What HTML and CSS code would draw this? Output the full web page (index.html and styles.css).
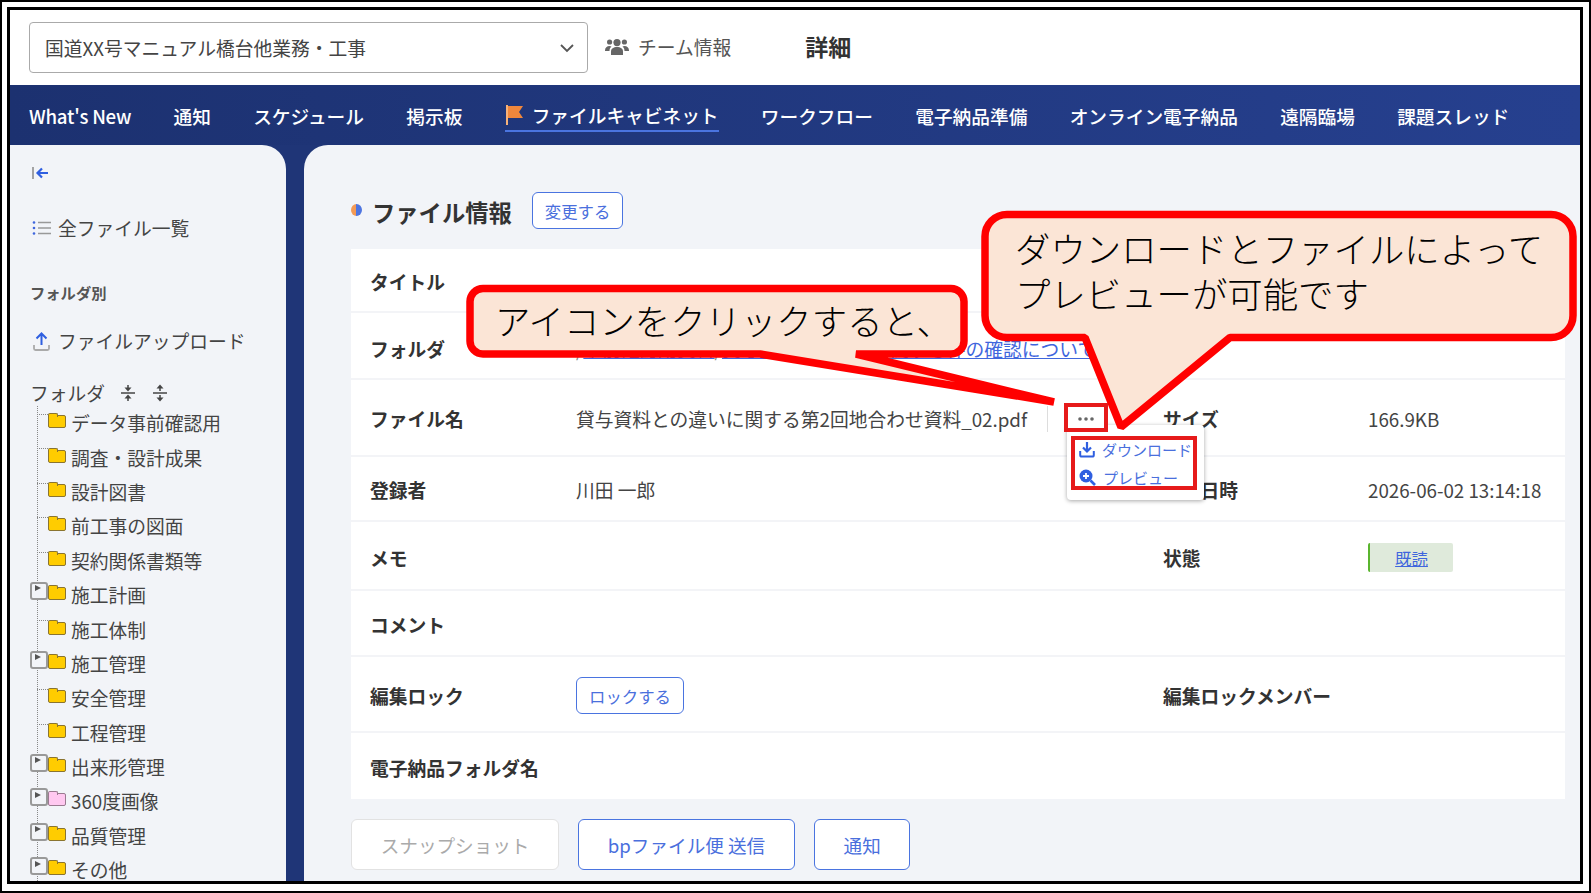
FILE: index.html
```html
<!DOCTYPE html>
<html lang="ja">
<head>
  <meta charset="UTF-8" />
  <title>ファイル情報</title>
  <link rel="stylesheet" href="styles.css">
</head>
<body>
<div class="page">
  <div class="screen">

    <header class="topbar">
      <div class="project-select">
        <span>国道XX号マニュアル橋台他業務・工事</span>
        <svg class="chevron" width="16" height="10" viewBox="0 0 16 10"><path d="M2 2l6 6 6-6" fill="none" stroke="#555" stroke-width="1.8"/></svg>
      </div>
      <div class="team">
        <svg width="24" height="18" viewBox="0 0 24 18" fill="#666"><circle cx="12" cy="4.6" r="3.6"/><circle cx="4.6" cy="4" r="2.6"/><circle cx="19.4" cy="4" r="2.6"/><path d="M6 17v-3.5C6 10.500 8.500 9 12 9s6 1.500 6 4.500V17z"/><path d="M0 12.500C0 9.500 2 8 4.500 8c.9 0 1.500.2 2 .5C5 9.700 4.500 11.200 4.500 13H0zM24 12.500C24 9.500 22 8 19.500 8c-.9 0-1.500.2-2 .5 1.500 1.200 2 2.700 2 4.500H24z"/></svg>
        <span>チーム情報</span>
      </div>
      <div class="page-name">詳細</div>
    </header>

    <nav class="mainnav">
      <a>What's New</a>
      <a>通知</a>
      <a>スケジュール</a>
      <a>掲示板</a>
      <a class="active">
        <svg width="19" height="20" viewBox="0 0 19 20"><path d="M1 0h2v20H1z" fill="#f6b27a"/><path d="M3 1h15l-4 6 4 6H3z" fill="#f0873c"/></svg>
        ファイルキャビネット
      </a>
      <a>ワークフロー</a>
      <a>電子納品準備</a>
      <a>オンライン電子納品</a>
      <a>遠隔臨場</a>
      <a>課題スレッド</a>
    </nav>

    <div class="body-row">
      <aside class="sidebar">
        <svg class="collapse" width="17" height="14" viewBox="0 0 17 14"><path d="M1 1v12" stroke="#888" stroke-width="1.500"/><path d="M16 7H6M10 2.500 5.500 7l4.500 4.500" fill="none" stroke="#2f5fe0" stroke-width="2.200"/></svg>

        <div class="side-link all-files">
          <svg width="19" height="16" viewBox="0 0 19 16"><g fill="#3f66dd"><circle cx="2" cy="2.500" r="1.300"/><circle cx="2" cy="8" r="1.300"/><circle cx="2" cy="13.500" r="1.300"/></g><g stroke="#999" stroke-width="1.600"><path d="M6 2.500h13M6 8h13M6 13.500h13"/></g></svg>
          <span>全ファイル一覧</span>
        </div>

        <div class="side-heading">フォルダ別</div>

        <div class="side-link upload">
          <svg width="17" height="19" viewBox="0 0 17 19"><path d="M8.500 13V2M3.500 6.500 8.500 1.500l5 5" fill="none" stroke="#2f5fe0" stroke-width="2"/><path d="M1 13v3.500c0 1 .6 1.500 1.500 1.500h12c.9 0 1.500-.5 1.500-1.500V13" fill="none" stroke="#aaa" stroke-width="1.800"/></svg>
          <span>ファイルアップロード</span>
        </div>

        <div class="folder-title">
          <span>フォルダ</span>
          <svg width="16" height="18" viewBox="0 0 16 18"><path d="M1 9h14" stroke="#444" stroke-width="1.500"/><path d="M8 1v3M8 14v3" stroke="#444" stroke-width="1.500"/><path d="M4.500 3.500h7L8 7.500zM4.500 14.500h7L8 10.500z" fill="#444"/></svg>
          <svg width="16" height="18" viewBox="0 0 16 18"><path d="M1 9h14" stroke="#444" stroke-width="1.500"/><path d="M8 4v3M8 11v3" stroke="#444" stroke-width="1.500"/><path d="M4.500 4.500h7L8 .5zM4.500 13.500h7L8 17.500z" fill="#444"/></svg>
        </div>

        <ul class="tree">
          <li><i class="folder"></i>データ事前確認用</li>
          <li><i class="folder"></i>調査・設計成果</li>
          <li><i class="folder"></i>設計図書</li>
          <li><i class="folder"></i>前工事の図面</li>
          <li><i class="folder"></i>契約関係書類等</li>
          <li class="has-kids"><i class="folder"></i>施工計画</li>
          <li><i class="folder"></i>施工体制</li>
          <li class="has-kids"><i class="folder"></i>施工管理</li>
          <li><i class="folder"></i>安全管理</li>
          <li><i class="folder"></i>工程管理</li>
          <li class="has-kids"><i class="folder"></i>出来形管理</li>
          <li class="has-kids"><i class="folder pink"></i>360度画像</li>
          <li class="has-kids"><i class="folder"></i>品質管理</li>
          <li class="has-kids"><i class="folder"></i>その他</li>
        </ul>
      </aside>

      <main class="content">
        <div class="title-row">
          <i class="title-dot"></i>
          <h2>ファイル情報</h2>
          <button class="btn btn-small change-btn">変更する</button>
        </div>

        <div class="info-card">
          <div class="info-row"><b>タイトル</b></div>
          <div class="info-row folder-row">
            <b>フォルダ</b>
            <span class="path">/<a>事前確認用資料</a>/<a>貸与資料との違いに関する件の確認について</a></span>
          </div>
          <div class="info-row">
            <b>ファイル名</b>
            <span class="file-cell">
              貸与資料との違いに関する第2回地合わせ資料_02.pdf
              <span class="file-actions">
                <button class="dots"><svg width="16" height="4" viewBox="0 0 16 4" fill="#666"><circle cx="2" cy="2" r="1.800"/><circle cx="8" cy="2" r="1.800"/><circle cx="14" cy="2" r="1.800"/></svg></button>
                <div class="file-menu">
                  <div class="file-menu-in">
                    <div class="menu-item">
                      <svg width="16" height="17" viewBox="0 0 16 17"><path d="M8 1v9M4 6.500 8 10.500l4-4" fill="none" stroke="#2f5fe0" stroke-width="2.200"/><path d="M1.200 10v4c0 1 .6 1.600 1.600 1.600h10.400c1 0 1.600-.6 1.600-1.600v-4" fill="none" stroke="#2f5fe0" stroke-width="2"/></svg>
                      <span>ダウンロード</span>
                    </div>
                    <div class="menu-item">
                      <svg width="17" height="17" viewBox="0 0 17 17"><circle cx="7" cy="7" r="6.500" fill="#2f5fe0"/><path d="M4 7h6M7 4v6" stroke="#fff" stroke-width="1.800"/><path d="M11.500 11.500 16 16" stroke="#2f5fe0" stroke-width="2.600"/></svg>
                      <span>プレビュー</span>
                    </div>
                  </div>
                </div>
              </span>
            </span>
            <b>サイズ</b>
            <span>166.9KB</span>
          </div>
          <div class="info-row">
            <b>登録者</b><span>川田 一郎</span>
            <b>登録日時</b><span>2026-06-02 13:14:18</span>
          </div>
          <div class="info-row memo-row">
            <b>メモ</b><span></span>
            <b>状態</b><span class="read-badge"><a>既読</a></span>
          </div>
          <div class="info-row"><b>コメント</b></div>
          <div class="info-row">
            <b>編集ロック</b>
            <span><button class="btn btn-small lock-btn">ロックする</button></span>
            <b class="nowrap">編集ロックメンバー</b><span></span>
          </div>
          <div class="info-row"><b class="nowrap">電子納品フォルダ名</b></div>
        </div>

        <div class="actions">
          <button class="btn btn-large disabled">スナップショット</button>
          <button class="btn btn-large">bpファイル便 送信</button>
          <button class="btn btn-large">通知</button>
        </div>
      </main>
    </div>
  </div>

  <svg class="callouts" width="1591" height="893" viewBox="0 0 1591 893">
    <path class="bubble" d="M483 288.500H951a13 13 0 0 1 13 13V341a13 13 0 0 1-13 13H856L1054 402 760 354H483a13 13 0 0 1-13-13V301.500a13 13 0 0 1 13-13z"/>
    <text class="bubble-text" x="495" y="334.500">アイコンをクリックすると、</text>
    <path class="bubble" d="M1007 214.500H1551a22 22 0 0 1 22 22V315.500a22 22 0 0 1-22 22H1230L1121 427 1085 337.500H1007a22 22 0 0 1-22-22V236.500a22 22 0 0 1 22-22z"/>
    <text class="bubble-text" x="1015" y="262.500">ダウンロードとファイルによって</text>
    <text class="bubble-text" x="1015" y="308">プレビューが可能です</text>
  </svg>
</div>
</body>
</html>
```

FILE: styles.css
```css
* { box-sizing: border-box; }
body {
  margin: 0;
  background: #fff;
  font-family: "Noto Sans CJK JP", "Noto Sans", sans-serif;
  color: #444;
  font-size: 18.75px;
  line-height: 26px;
}
a { color: inherit; }
button { font-family: inherit; cursor: pointer; }

.page {
  position: relative;
  width: 1591px;
  height: 893px;
  border: 2px solid #000;
  padding: 5px 6px 7px 5px;
  background: #fff;
}
.screen {
  height: 100%;
  border: 3px solid #000;
  display: flex;
  flex-direction: column;
  overflow: hidden;
  background: #fff;
}

/* top */
.topbar {
  height: 75px;
  flex: none;
  display: flex;
  align-items: center;
  padding-left: 19px;
  padding-bottom: 1px;
}
.project-select {
  width: 559px;
  height: 51px;
  border: 1px solid #aaa;
  border-radius: 4px;
  display: flex;
  align-items: center;
  justify-content: space-between;
  padding: 2px 12px 0 15px;
  color: #444;
}
.team {
  display: flex;
  align-items: center;
  gap: 9px;
  margin-left: 17px;
  color: #555;
}
.page-name {
  margin-left: 74px;
  font-size: 23px;
  font-weight: 700;
  color: #333;
  margin-top: -2px;
}

.mainnav {
  height: 60px;
  flex: none;
  display: flex;
  align-items: center;
  gap: 42.3px;
  padding: 2px 0 0 19px;
  background: linear-gradient(90deg, #1c3170, #26408f);
  color: #fff;
  font-size: 18.7px;
  font-weight: 500;
  white-space: nowrap;
}
.mainnav a { display: flex; align-items: center; height: 32px; }
.mainnav a:first-child { letter-spacing: -0.25px; }
.mainnav a.active {
  gap: 8px;
  border-bottom: 2px solid #4a74e0;
}

.body-row {
  flex: 1;
  min-height: 0;
  display: flex;
  gap: 18px;
  background: #1f3577;
}

/* left side */
.sidebar {
  width: 276px;
  flex: none;
  background: #f2f4f8;
  border-top-right-radius: 24px;
  padding: 21px 0 0 20px;
  overflow: hidden;
}
.collapse { display: block; margin-left: 2px; }
.side-link { display: flex; align-items: center; gap: 7px; color: #444; }
.all-files { margin-top: 35px; margin-left: 2px; }
.side-heading {
  margin-top: 38px;
  font-size: 15.300px;
  font-weight: 700;
  color: #555;
}
.upload { margin-top: 23px; margin-left: 3px; gap: 8px; }
.folder-title {
  display: flex;
  align-items: center;
  margin-top: 26px;
  height: 26px;
}
.folder-title svg { margin-left: 16px; }
.folder-title svg:first-of-type { margin-left: 15px; }

.tree {
  list-style: none;
  margin: 0 0 0 -20px;
  padding: 0 0 0 38px;
  position: relative;
}
.tree::before {
  content: "";
  position: absolute;
  left: 27px;
  top: 0;
  bottom: -40px;
  border-left: 1px dotted #888;
}
.tree li {
  position: relative;
  height: 34.4px;
  line-height: 22px;
  display: flex;
  align-items: center;
  gap: 5px;
}
.tree li::before {
  content: "";
  position: absolute;
  left: -11px;
  top: 8px;
  width: 11px;
  border-top: 1px dotted #888;
}
.tree .has-kids::before {
  left: -18px;
  top: 4px;
  width: 14px;
  height: 14px;
  border: 2px solid #999;
  border-radius: 3px;
  background: #f2f4f8;
}
.tree .has-kids::after {
  content: "";
  position: absolute;
  left: -13px;
  top: 7.500px;
  border-left: 6px solid #555;
  border-top: 3.500px solid transparent;
  border-bottom: 3.500px solid transparent;
}
.folder {
  position: relative;
  width: 18px;
  height: 13px;
  margin-top: -3px;
  background: #ffcc00;
  border: 1px solid #8a7430;
  border-radius: 2px;
  flex: none;
}
.folder::before {
  content: "";
  position: absolute;
  left: -1px;
  top: -3px;
  width: 8px;
  height: 3px;
  background: #ffcc00;
  border: 1px solid #8a7430;
  border-bottom: none;
  border-radius: 2px 2px 0 0;
}
.folder.pink, .folder.pink::before { background: #ffc8f0; border-color: #9a7a90; }

/* main */
.content {
  flex: 1;
  min-width: 0;
  background: #f2f4f8;
  border-top-left-radius: 24px;
  padding: 47px 15px 0 47px;
  overflow: hidden;
}
.title-row { display: flex; align-items: center; height: 37px; }
.title-dot {
  width: 11px;
  height: 12px;
  border-radius: 50%;
  background: linear-gradient(90deg, #f49a55 50%, #4e75e0 50%);
  margin-top: -2px;
}
.title-row h2 {
  margin: 3px 0 0 10px;
  font-size: 23.300px;
  font-weight: 700;
  color: #333;
}
.btn {
  background: #fff;
  border: 1.500px solid #4a74e0;
  color: #4a6fdd;
  border-radius: 6px;
}
.btn-small { height: 37px; padding: 0 12px; font-size: 16.400px; }
.change-btn { margin-left: 20px; }
.lock-btn { display: block; }
.btn-large {
  height: 51px;
  padding: 0 28.700px;
  font-size: 18.600px;
}
.btn-large.disabled {
  color: #aaa;
  border: 1.500px solid #e2e2e2;
}

.info-card {
  margin-top: 20px;
  background: #fff;
  display: grid;
  grid-template-rows: 64px 67px 77px 65px 69px 66px 76px 66px;
}
.info-row {
  display: grid;
  grid-template-columns: 206px 587px 205px 1fr;
  align-items: center;
  padding: 3px 0 0 19px;
  border-bottom: 2px solid #f3f4f7;
  white-space: nowrap;
}
.info-row:last-child { border-bottom: none; }
.info-row b { font-weight: 700; color: #333; }
.folder-row { padding-top: 6px; }
.memo-row { padding-top: 4px; }
.path { color: #888; }
.path a { color: #3f66dd; text-decoration: underline; }
.file-cell { display: flex; align-items: center; }
.file-actions {
  position: relative;
  margin-left: 20px;
  padding-left: 16px;
  border-left: 1px solid #ddd;
  height: 26px;
  display: flex;
  align-items: center;
}
.dots {
  position: relative;
  z-index: 1;
  width: 44px;
  height: 29px;
  margin-top: -4px;
  border: 4px solid #e61a1a;
  background: #fff;
  padding: 3px 0 0;
  display: flex;
  align-items: center;
  justify-content: center;
}
.file-menu {
  position: absolute;
  left: 19px;
  top: 18.500px;
  width: 137px;
  height: 75px;
  padding: 11px 7px 10px 4px;
  background: #fff;
  border-radius: 4px;
  box-shadow: 0 1px 4px rgba(0, 0, 0, 0.35);
}
.file-menu-in {
  border: 4px solid #e61a1a;
  height: 54px;
  padding: 1px 0 0 4px;
  display: flex;
  flex-direction: column;
  gap: 10px;
}
.menu-item {
  height: 18px;
  line-height: 18px;
  display: flex;
  align-items: center;
  gap: 7px;
  color: #4a6fdd;
  font-size: 15px;
}
.read-badge {
  width: 85px;
  height: 29px;
  background: #dfeadb;
  border-left: 2px solid #5ab52e;
  border-radius: 2px;
  display: flex;
  align-items: center;
  justify-content: center;
  font-size: 16.400px;
}
.read-badge a { color: #3f66dd; text-decoration: underline; }
.nowrap { white-space: nowrap; }

.actions { display: flex; gap: 19px; margin-top: 20px; }

/* callouts lie over everything */
.callouts {
  position: absolute;
  left: -2px;
  top: -2px;
  pointer-events: none;
}
.bubble {
  fill: #fbe5d6;
  stroke: #ff0000;
  stroke-width: 7.500;
  stroke-linejoin: bevel;
}
.bubble-text {
  font-size: 35.400px;
  font-weight: 300;
  fill: #000;
}
```
